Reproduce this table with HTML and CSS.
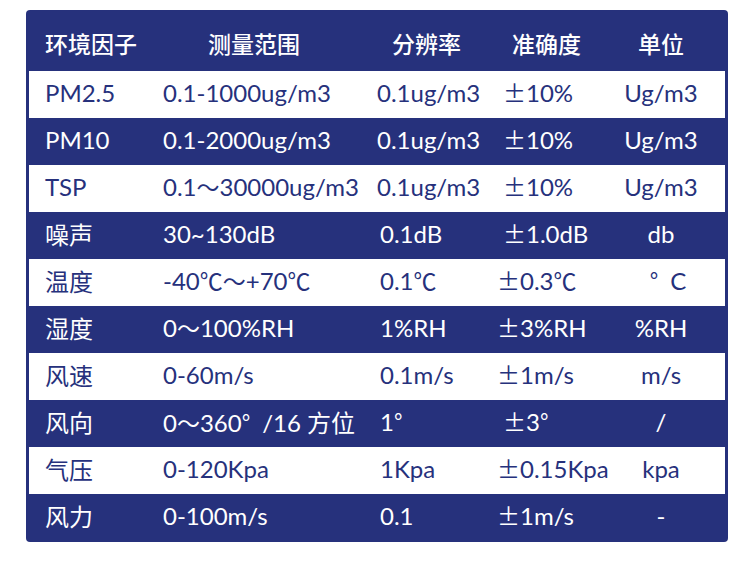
FILE: index.html
```html
<!DOCTYPE html>
<html lang="zh">
<head>
<meta charset="utf-8">
<link rel="stylesheet" href="styles.css">
</head>
<body>
<div class="card">
  <div class="row head">
    <div class="c1">环境因子</div>
    <div class="c2">测量范围</div>
    <div class="c3">分辨率</div>
    <div class="c4">准确度</div>
    <div class="c5">单位</div>
  </div>
  <div class="row light">
    <div class="c1">PM2.5</div>
    <div class="c2">0.1-1000ug/m3</div>
    <div class="c3 wide">0.1ug/m3</div>
    <div class="c4 in"><span class="w">±</span>10%</div>
    <div class="c5">Ug/m3</div>
  </div>
  <div class="row dark">
    <div class="c1">PM10</div>
    <div class="c2">0.1-2000ug/m3</div>
    <div class="c3 wide">0.1ug/m3</div>
    <div class="c4 in"><span class="w">±</span>10%</div>
    <div class="c5">Ug/m3</div>
  </div>
  <div class="row light">
    <div class="c1">TSP</div>
    <div class="c2">0.1<span class="w">～</span>30000ug/m3</div>
    <div class="c3 wide">0.1ug/m3</div>
    <div class="c4 in"><span class="w">±</span>10%</div>
    <div class="c5">Ug/m3</div>
  </div>
  <div class="row dark">
    <div class="c1">噪声</div>
    <div class="c2">30~130dB</div>
    <div class="c3">0.1dB</div>
    <div class="c4 in"><span class="w">±</span>1.0dB</div>
    <div class="c5">db</div>
  </div>
  <div class="row light">
    <div class="c1">温度</div>
    <div class="c2">-40<span class="w">℃～</span>+70<span class="w">℃</span></div>
    <div class="c3">0.1<span class="w">℃</span></div>
    <div class="c4"><span class="w">±</span>0.3<span class="w">℃</span></div>
    <div class="c5 deg"><span class="w gap">°</span>C</div>
  </div>
  <div class="row dark">
    <div class="c1">湿度</div>
    <div class="c2">0<span class="w">～</span>100%RH</div>
    <div class="c3">1%RH</div>
    <div class="c4"><span class="w">±</span>3%RH</div>
    <div class="c5">%RH</div>
  </div>
  <div class="row light">
    <div class="c1">风速</div>
    <div class="c2">0-60m/s</div>
    <div class="c3">0.1m/s</div>
    <div class="c4"><span class="w">±</span>1m/s</div>
    <div class="c5">m/s</div>
  </div>
  <div class="row dark">
    <div class="c1">风向</div>
    <div class="c2">0<span class="w">～</span>360<span class="w gap">°</span>/16 方位</div>
    <div class="c3">1<span class="w">°</span></div>
    <div class="c4 in"><span class="w">±</span>3<span class="w">°</span></div>
    <div class="c5">/</div>
  </div>
  <div class="row light">
    <div class="c1">气压</div>
    <div class="c2">0-120Kpa</div>
    <div class="c3">1Kpa</div>
    <div class="c4"><span class="w">±</span>0.15Kpa</div>
    <div class="c5">kpa</div>
  </div>
  <div class="row dark">
    <div class="c1">风力</div>
    <div class="c2">0-100m/s</div>
    <div class="c3">0.1</div>
    <div class="c4"><span class="w">±</span>1m/s</div>
    <div class="c5">-</div>
  </div>
</div>
</body>
</html>
```

FILE: styles.css
```css
html, body {
  margin: 0;
  padding: 0;
  background: #ffffff;
}

body {
  font-family: "Lato", "Noto Sans CJK SC", sans-serif;
  font-size: 24px;
  color: #26317c;
}

.card {
  margin: 10px 0 0 26px;
  width: 696px;
  padding: 0 3px 1px;
  background: #26317c;
  border-radius: 4px;
}

.row {
  display: grid;
  grid-template-columns: 134px 217px 117px 100px 1fr;
  align-items: center;
  height: 47px;
  padding-bottom: 5px;
  box-sizing: border-box;
  white-space: nowrap;
}

.row.head {
  height: 61px;
  padding-top: 4px;
  padding-bottom: 0;
  color: #ffffff;
  font-size: 23px;
  font-weight: 500;
}

.row.dark {
  color: #ffffff;
}

.row.light {
  background: #ffffff;
  color: #26317c;
}

.c1 {
  padding-left: 16px;
}

.c5 {
  text-align: center;
}

.head .c2 { padding-left: 45px; }
.head .c3 { padding-left: 12px; }
.head .c4 { padding-left: 15px; }

.c3.wide { margin-left: -3px; }
.c4.in { padding-left: 6px; }

.w {
  font-family: "Noto Sans CJK SC", sans-serif;
  font-size: 23px;
}

.gap {
  margin-right: 12px;
}

.deg {
  padding-left: 14px;
}
```
